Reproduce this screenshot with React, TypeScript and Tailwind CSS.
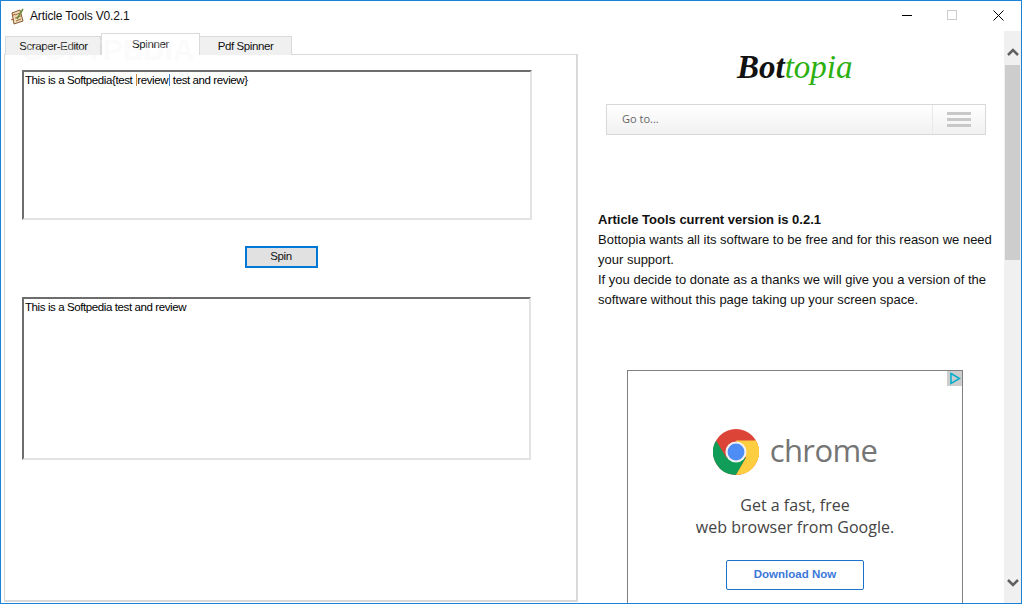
const ui = "font-['Liberation_Sans',Arial,sans-serif]";

function ChromeLogo() {
  return (
    <svg width="46" height="46" viewBox="0 0 48 48">
      <circle cx="24" cy="24" r="24" fill="#db4437" />
      <path d="M3.200 12 A24 24 0 0 0 24 48 L34.400 30 L14 30 Z" fill="#0f9d58" />
      <path d="M24 12 L44.800 12 A24 24 0 0 1 24 48 L34.400 30 Z" fill="#ffcd40" />
      <circle cx="24" cy="24" r="11" fill="#f1f1f1" />
      <circle cx="24" cy="24" r="8.800" fill="#4e8df5" />
    </svg>
  );
}

function TextBox({ width, height, text }: { width: string; height: string; text: React.ReactNode }) {
  return (
    <div className={`${width} ${height} border-2 border-[#6d6d6d] border-r-[#e3e3e3] border-b-[#e3e3e3] bg-white pl-[1px] pt-[1px] text-[11.500px] leading-[14px] tracking-[-0.4px] text-black`}>
      {text}
    </div>
  );
}

export default function App() {
  return (
    <div className={`${ui} relative flex h-[604px] w-[1022px] flex-col overflow-hidden border border-[#1883d7] bg-white`}>
      {/* title bar */}
      <div className="flex h-[30px] shrink-0 items-center">
        <svg className="ml-[9px] mr-[5px]" width="15" height="17" viewBox="0 0 15 17">
          <path d="M2 5 L10 2 L13 13 L4 16 Z" fill="#ecdcbc" stroke="#8a5a34" strokeWidth="1" />
          <path d="M5 7 L10 5 M5 10 L11 8 M6 13 L11 11" stroke="#a5673f" strokeWidth="1" />
          <path d="M7 11 L13 1" stroke="#6d8f3a" strokeWidth="1.500" />
          <path d="M2 8 L5 6 M1 12 L4 11" stroke="#b5532f" strokeWidth="1" />
        </svg>
        <span className="text-[12px] tracking-[-0.15px] text-[#111]">Article Tools V0.2.1</span>
        <div className="ml-auto flex self-start">
          <div className="flex h-[28px] w-[46px] items-center justify-center">
            <div className="ml-[2px] h-px w-[10px] bg-black" />
          </div>
          <div className="flex h-[28px] w-[46px] items-center justify-center">
            <div className="h-[10px] w-[10px] border border-[#cccccc]" />
          </div>
          <div className="flex h-[28px] w-[46px] items-center justify-center">
            <svg width="11" height="11" viewBox="0 0 11 11">
              <path d="M0.500 0.500 L10.500 10.500 M10.500 0.500 L0.500 10.500" stroke="#000" strokeWidth="1" />
            </svg>
          </div>
        </div>
      </div>

      <div className="flex min-h-0 flex-1">
        {/* left: tab control */}
        <div className="flex w-[577px] shrink-0 flex-col pl-[3px]">
          <div className="relative z-10 -mb-px mt-[2px] flex h-[22px] items-end pl-[1px] text-[11.500px] tracking-[-0.4px] text-[#111]">
            <div className="flex h-[19px] w-[96px] items-center justify-center border border-b-0 border-[#d9d9d9] bg-[#f0f0f0] pt-[1px] pl-[1px]">Scraper-Editor</div>
            <div className="flex h-[22px] w-[99px] items-start justify-center border border-b-0 border-[#d9d9d9] bg-white pt-[2px]">Spinner</div>
            <div className="flex h-[19px] w-[92px] items-center justify-center border border-b-0 border-l-0 border-[#d9d9d9] bg-[#f0f0f0] pt-[1px]">Pdf Spinner</div>
          </div>
          <div className="mb-[1px] flex flex-1 flex-col border border-[#d9d9d9] border-r-2 border-b-2 pl-[17px] pt-[15px]">
            <TextBox
              width="w-[510px]"
              height="h-[150px]"
              text={
                <>
                  This is a Softpedia{"{"}test <span className="ml-px border-l border-[#d08a3c]">review</span>
                  <span className="ml-px border-l border-[#3c87d0]"> test and review{"}"}</span>
                </>
              }
            />
            <div className="mt-[26px] mb-[29px] flex w-[518px] justify-center">
              <button className="flex h-[22px] w-[73px] items-center justify-center border-2 border-[#0078d7] bg-[#e1e1e1] text-[11.500px] tracking-[-0.4px] text-[#111]">
                Spin
              </button>
            </div>
            <TextBox width="w-[509px]" height="h-[163px]" text="This is a Softpedia test and review" />
          </div>
        </div>

        {/* right: embedded page */}
        <div className="flex min-w-0 flex-1 flex-col overflow-hidden pl-[20px]">
          <div className="ml-[139px] mt-[15px] h-[42px] font-['Liberation_Serif',serif] text-[33px] leading-[42px] italic">
            <span className="font-bold text-[#111]">Bot</span>
            <span className="text-[#2bb00f]">topia</span>
          </div>
          <div className="ml-[8px] mt-[16px] flex h-[31px] w-[380px] shrink-0 items-center border border-[#d8d8d8] bg-gradient-to-b from-white to-[#f1f1f1]">
            <span className="ml-[15px] flex-1 font-['Open_Sans',sans-serif] text-[11px] text-[#666666]">Go to...</span>
            <div className="flex h-full w-[53px] flex-col items-center justify-center gap-[3px] border-l border-[#e8e8e8]">
              <div className="h-[3px] w-[24px] bg-[#c8c8c8]" />
              <div className="h-[3px] w-[24px] bg-[#c8c8c8]" />
              <div className="h-[3px] w-[24px] bg-[#c8c8c8]" />
            </div>
          </div>
          <div className="mt-[75px] w-[400px] text-[13px] leading-[20px] text-[#111]">
            <div className="font-bold">Article Tools current version is 0.2.1</div>
            <div>Bottopia wants all its software to be free and for this reason we need your support.</div>
            <div>If you decide to donate as a thanks we will give you a version of the software without this page taking up your screen space.</div>
          </div>
          <div className="relative ml-[29px] mt-[60px] flex h-[300px] w-[336px] shrink-0 flex-col items-center border border-[#808080] bg-white">
            <div className="absolute right-0 top-0 flex h-[15px] w-[15px] items-center justify-center bg-[#cdcdcd]">
              <svg width="12" height="13" viewBox="0 0 12 13">
                <path d="M2 1.500 L10.500 6.500 L2 11.500 Z" fill="none" stroke="#00aecd" strokeWidth="1.500" />
              </svg>
            </div>
            <div className="mt-[58px] flex h-[46px] items-start">
              <ChromeLogo />
              <span className="ml-[11px] font-['Open_Sans',sans-serif] text-[31px] leading-[42px] tracking-[-0.6px] text-[#757575]">chrome</span>
            </div>
            <div className="mt-[19px] text-center font-['Open_Sans',sans-serif] text-[16px] leading-[22px] text-[#444444]">
              Get a fast, free
              <br />
              web browser from Google.
            </div>
            <div className="mt-[22px] flex h-[30px] w-[138px] items-center justify-center rounded-[2px] border border-[#1a73c8] text-[11.500px] font-bold text-[#3b78d8]">
              Download Now
            </div>
          </div>
        </div>

        {/* scrollbar */}
        <div className="flex w-[17px] shrink-0 flex-col bg-[#f0f0f0]">
          <div className="flex h-[34px] items-end justify-center pb-[9px]">
            <svg width="12" height="8" viewBox="0 0 12 8">
              <path d="M1 7 L6 2 L11 7" fill="none" stroke="#606060" strokeWidth="2.500" />
            </svg>
          </div>
          <div className="mx-px h-[195px] bg-[#cdcdcd]" />
          <div className="mb-[16px] mt-auto flex justify-center">
            <svg width="12" height="8" viewBox="0 0 12 8">
              <path d="M1 1 L6 6 L11 1" fill="none" stroke="#606060" strokeWidth="2.500" />
            </svg>
          </div>
        </div>
      </div>

      {/* watermark */}
      <div className="pointer-events-none absolute left-[22px] top-[31px] z-20 text-[30px] font-bold leading-[36px] text-[#f4f4f4]/35">
        SOFTPEDIA
      </div>
    </div>
  );
}
